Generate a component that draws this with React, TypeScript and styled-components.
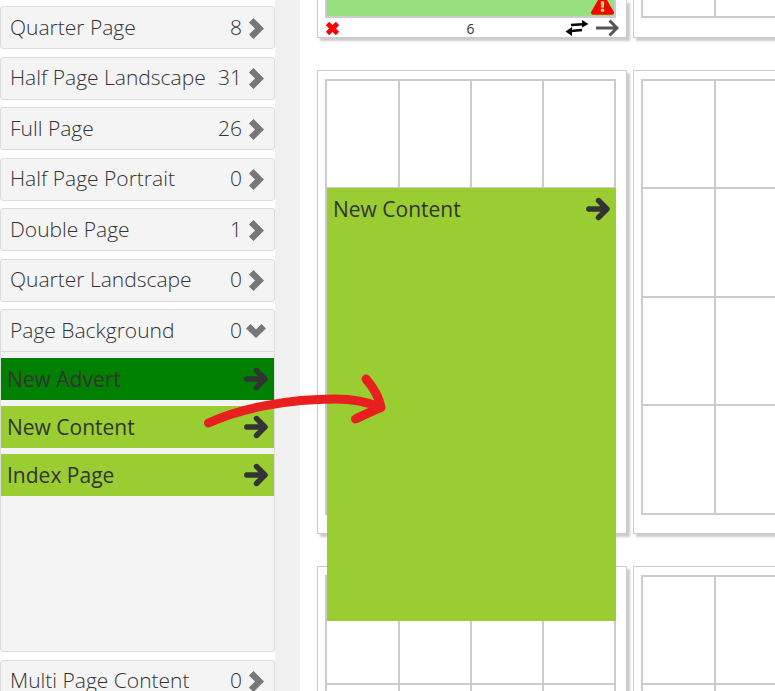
import { createGlobalStyle, styled } from "styled-components";
import { FaExclamationTriangle } from "react-icons/fa";

const GlobalStyle = createGlobalStyle`
  html, body {
    margin: 0;
    padding: 0;
    height: 691px;
    overflow: hidden;
    background: #fff;
    font-family: "Open Sans", "Liberation Sans", sans-serif;
    color: #333;
  }
`;

const Page = styled.div`
  position: relative;
  display: flex;
  width: 775px;
  height: 691px;
  overflow: hidden;
`;

const Sidebar = styled.div`
  flex: 0 0 275px;
  padding-top: 6px;
  box-sizing: border-box;
`;

const Gutter = styled.div`
  flex: 0 0 25px;
  background: #f0f0f0;
`;

const Main = styled.div`
  flex: 1;
  padding-left: 17.3px;
  min-width: 0;
`;

const Panel = styled.div<{ $height?: number }>`
  box-sizing: border-box;
  width: 275px;
  height: ${(p) => p.$height ?? 43}px;
  margin-bottom: 7.5px;
  background: #f4f4f4;
  border: 1px solid #dcdcdc;
  border-radius: 3px;
`;

const PanelHead = styled.div<{ $open?: boolean }>`
  display: flex;
  align-items: center;
  height: ${(p) => (p.$open ? 42 : 41)}px;
  box-sizing: border-box;
  padding: 0 10px 2px 9px;
  font-size: 21px;
  font-weight: 300;
  color: #333;
  border-bottom: ${(p) => (p.$open ? "1px solid #dcdcdc" : "none")};
`;

const PanelName = styled.span`
  flex: 1;
  white-space: nowrap;
`;

const PanelCount = styled.span<{ $open?: boolean }>`
  margin-right: ${(p) => (p.$open ? 4 : 7)}px;
`;

const ChevronIcon = styled.svg<{ $open?: boolean }>`
  flex: none;
  margin-top: 3px;
  margin-right: ${(p) => (p.$open ? -2 : 0)}px;
`;

const ItemList = styled.div`
  display: flex;
  flex-direction: column;
  gap: 6px;
  padding-top: 6px;
`;

const DragItem = styled.div<{ $bg: string }>`
  display: flex;
  align-items: center;
  justify-content: space-between;
  box-sizing: border-box;
  height: 42px;
  padding: 0 6px 0 6px;
  background: ${(p) => p.$bg};
  font-size: 21px;
  font-weight: 400;
  color: #333;
`;

const CardRow = styled.div<{ $mb: number }>`
  display: flex;
  gap: 6px;
  margin-bottom: ${(p) => p.$mb}px;
`;

const Card = styled.div<{ $clipped?: boolean }>`
  flex: 0 0 310px;
  box-sizing: border-box;
  height: ${(p) => (p.$clipped ? 38.4 : 464)}px;
  padding: ${(p) => (p.$clipped ? 0 : 8)}px 10.3px 0 6.7px;
  background: #fff;
  border: 1px solid #ccc;
  border-top: ${(p) => (p.$clipped ? "none" : "1px solid #ccc")};
  box-shadow: 3px 3px 2px #ccc;
`;

const Sheet = styled.div<{ $rows: number; $height: number }>`
  display: grid;
  grid-template-columns: 71fr 71fr 70fr 70fr;
  grid-template-rows: repeat(${(p) => p.$rows}, 1fr);
  gap: 2px;
  box-sizing: border-box;
  height: ${(p) => p.$height}px;
  padding: 2px;
  background: #ccc;
`;

const ClippedSheet = styled(Sheet)`
  padding-top: 0;
`;

const Cell = styled.div`
  background: #fff;
`;

const FilledCell = styled.div`
  grid-column: 1 / -1;
  display: flex;
  justify-content: flex-end;
  align-items: flex-end;
  overflow: hidden;
  background: #98df7f;
  color: #f00;
  font-size: 23px;
  line-height: 0;
`;

const CardFooter = styled.div`
  display: grid;
  grid-template-columns: 1fr auto 1fr;
  align-items: center;
  height: 20px;
  font-size: 14px;
`;

const FooterActions = styled.div`
  display: flex;
  justify-content: flex-end;
  align-items: center;
  gap: 6px;
  margin-right: -3px;
`;

const Overlay = styled.div`
  position: absolute;
  left: 327px;
  top: 188px;
  width: 289px;
  height: 433px;
  background: #9acd32;
`;

const RedArrow = styled.svg`
  position: absolute;
  left: 0;
  top: 0;
  pointer-events: none;
`;

const Chevron = ({ down }: { down?: boolean }) =>
  down ? (
    <ChevronIcon $open width="20" height="14" viewBox="0 0 20 14">
      <polygon points="4.5,0 10,5.5 15.5,0 20,4.5 10,14 0,4.5" fill="#777" />
    </ChevronIcon>
  ) : (
    <ChevronIcon width="15" height="21" viewBox="0 0 15 21">
      <polygon points="4.5,0 15,10.5 4.5,21 0,16.5 6,10.5 0,4.5" fill="#777" />
    </ChevronIcon>
  );

const BoldArrow = () => (
  <svg width="24" height="24" viewBox="0 0 24 24">
    <path
      d="M2.8 12 H20 M12.5 3.5 L21 12 L12.5 20.5"
      fill="none"
      stroke="#333"
      strokeWidth="5.4"
      strokeLinecap="round"
      strokeLinejoin="round"
    />
  </svg>
);

const SwapIcon = () => (
  <svg width="24" height="18" viewBox="0 0 24 18">
    <path d="M6 6 L18 5.2" fill="none" stroke="#000" strokeWidth="2.4" />
    <path d="M17 1 L23.5 5 L17 8.5 Z" fill="#000" />
    <path d="M17 11 L6 12" fill="none" stroke="#000" strokeWidth="2.4" />
    <path d="M7 8 L0.5 12.5 L7 17 Z" fill="#000" />
  </svg>
);

const panelsTop = [
  { name: "Quarter Page", count: 8 },
  { name: "Half Page Landscape", count: 31 },
  { name: "Full Page", count: 26 },
  { name: "Half Page Portrait", count: 0 },
  { name: "Double Page", count: 1 },
  { name: "Quarter Landscape", count: 0 },
];

const dragItems = [
  { name: "New Advert", bg: "#008000" },
  { name: "New Content", bg: "#9acd32" },
  { name: "Index Page", bg: "#9acd32" },
];

const FourByFour = () => (
  <Sheet $rows={4} $height={436}>
    {Array.from({ length: 16 }).map((_, i) => (
      <Cell key={i} />
    ))}
  </Sheet>
);

export default function App() {
  return (
    <>
      <GlobalStyle />
      <Page>
        <Sidebar>
          {panelsTop.map((panel) => (
            <Panel key={panel.name}>
              <PanelHead>
                <PanelName>{panel.name}</PanelName>
                <PanelCount>{panel.count}</PanelCount>
                <Chevron />
              </PanelHead>
            </Panel>
          ))}
          <Panel $height={343}>
            <PanelHead $open>
              <PanelName>Page Background</PanelName>
              <PanelCount $open>0</PanelCount>
              <Chevron down />
            </PanelHead>
            <ItemList>
              {dragItems.map((item) => (
                <DragItem key={item.name} $bg={item.bg}>
                  {item.name}
                  <BoldArrow />
                </DragItem>
              ))}
            </ItemList>
          </Panel>
          <Panel>
            <PanelHead>
              <PanelName>Multi Page Content</PanelName>
              <PanelCount>0</PanelCount>
              <Chevron />
            </PanelHead>
          </Panel>
        </Sidebar>
        <Gutter />
        <Main>
          <CardRow $mb={31.6}>
            <Card $clipped>
              <ClippedSheet $rows={1} $height={18}>
                <FilledCell>
                  <FaExclamationTriangle />
                </FilledCell>
              </ClippedSheet>
              <CardFooter>
                <svg width="15" height="15" viewBox="0 0 15 15">
                  <path d="M2.5 2.5 L12.5 12.5 M12.5 2.5 L2.5 12.5" stroke="#f00" strokeWidth="4.6" />
                </svg>
                <span>6</span>
                <FooterActions>
                  <SwapIcon />
                  <svg width="24" height="18" viewBox="0 0 24 18">
                    <path d="M1 9 H22 M14.5 1.5 L22 9 L14.5 16.5" fill="none" stroke="#555" strokeWidth="3" />
                  </svg>
                </FooterActions>
              </CardFooter>
            </Card>
            <Card $clipped>
              <ClippedSheet $rows={1} $height={18}>
                <Cell />
                <Cell />
                <Cell />
                <Cell />
              </ClippedSheet>
            </Card>
          </CardRow>
          <CardRow $mb={32}>
            <Card>
              <FourByFour />
            </Card>
            <Card>
              <FourByFour />
            </Card>
          </CardRow>
          <CardRow $mb={0}>
            <Card>
              <FourByFour />
            </Card>
            <Card>
              <FourByFour />
            </Card>
          </CardRow>
        </Main>
        <Overlay>
          <DragItem $bg="#9acd32">
            New Content
            <BoldArrow />
          </DragItem>
        </Overlay>
        <RedArrow width="775" height="691" viewBox="0 0 775 691">
          <path
            d="M208.5 423 C 240 408, 290 399, 335 399 C 352 399, 368 402, 381 407.5 M366 379 C 374 388, 379 397, 381 407.5 C 372 411, 364 415, 355.5 419"
            fill="none"
            stroke="#e81f1f"
            strokeWidth="9"
            strokeLinecap="round"
            strokeLinejoin="round"
          />
        </RedArrow>
      </Page>
    </>
  );
}
